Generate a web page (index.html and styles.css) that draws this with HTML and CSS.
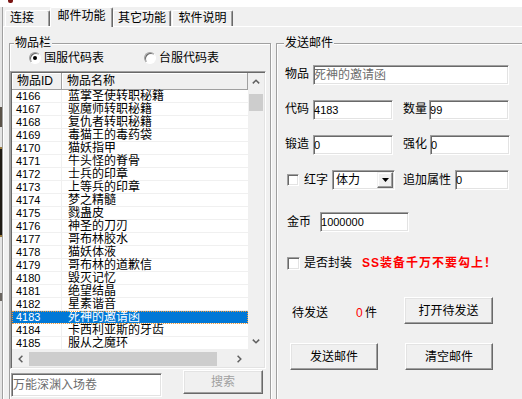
FILE: index.html
```html
<!DOCTYPE html>
<html lang="zh-CN">
<head>
<meta charset="utf-8">
<title>邮件功能</title>
<link rel="stylesheet" href="styles.css">
</head>
<body>
<div class="topbar"><span class="appicon"></span></div>
<div class="window">
  <div class="backdrop">
    <span class="bd-space1"></span>
    <span class="bd-mark1"></span>
    <span class="bd-space2"></span>
    <span class="bd-dark"></span>
    <span class="bd-space3"></span>
    <span class="bd-mark2"></span>
  </div>
  <div class="tabctl">
    <div class="tabs">
      <div class="tab t1">连接</div>
      <div class="tab sel">邮件功能</div>
      <div class="tab t3">其它功能</div>
      <div class="tab t4">软件说明</div>
    </div>
    <div class="panel">
      <fieldset class="group left">
        <legend>物品栏</legend>
        <div class="radios">
          <span class="radio on"></span><span class="rlabel">国服代码表</span>
          <span class="radio radio2"></span><span class="rlabel">台服代码表</span>
        </div>
        <div class="listview">
          <div class="lv-main">
            <div class="lv-head">
              <div class="hc hc1">物品ID</div>
              <div class="hc hc2">物品名称</div>
            </div>
            <div class="row"><span class="id">4166</span><span class="nm">蓝掌圣使转职秘籍</span></div>
            <div class="row"><span class="id">4167</span><span class="nm">驱魔师转职秘籍</span></div>
            <div class="row"><span class="id">4168</span><span class="nm">复仇者转职秘籍</span></div>
            <div class="row"><span class="id">4169</span><span class="nm">毒猫王的毒药袋</span></div>
            <div class="row"><span class="id">4170</span><span class="nm">猫妖指甲</span></div>
            <div class="row"><span class="id">4171</span><span class="nm">牛头怪的脊骨</span></div>
            <div class="row"><span class="id">4172</span><span class="nm">士兵的印章</span></div>
            <div class="row"><span class="id">4173</span><span class="nm">上等兵的印章</span></div>
            <div class="row"><span class="id">4174</span><span class="nm">梦之精髓</span></div>
            <div class="row"><span class="id">4175</span><span class="nm">戮蛊皮</span></div>
            <div class="row"><span class="id">4176</span><span class="nm">神圣的刀刃</span></div>
            <div class="row"><span class="id">4177</span><span class="nm">哥布林胶水</span></div>
            <div class="row"><span class="id">4178</span><span class="nm">猫妖体液</span></div>
            <div class="row"><span class="id">4179</span><span class="nm">哥布林的道歉信</span></div>
            <div class="row"><span class="id">4180</span><span class="nm">毁灭记忆</span></div>
            <div class="row"><span class="id">4181</span><span class="nm">绝望结晶</span></div>
            <div class="row"><span class="id">4182</span><span class="nm">星素谐音</span></div>
            <div class="row sel"><span class="id">4183</span><span class="nm">死神的邀请函</span></div>
            <div class="row"><span class="id">4184</span><span class="nm">卡西利亚斯的牙齿</span></div>
            <div class="row"><span class="id">4185</span><span class="nm">服从之魔环</span></div>
          </div>
          <div class="vscroll">
            <span class="arrow"><svg width="8" height="5" viewBox="0 0 8 5"><path d="M0.8 4.4 L4 1.2 L7.2 4.4" fill="none" stroke="#606060" stroke-width="1.5"/></svg></span>
            <span class="vthumb"></span>
            <span class="fill"></span>
            <span class="arrow"><svg width="8" height="5" viewBox="0 0 8 5"><path d="M0.8 0.6 L4 3.8 L7.2 0.6" fill="none" stroke="#606060" stroke-width="1.5"/></svg></span>
          </div>
          <div class="hscroll">
            <span class="harrow"><svg width="5" height="8" viewBox="0 0 5 8"><path d="M4.4 0.8 L1.2 4 L4.4 7.2" fill="none" stroke="#606060" stroke-width="1.5"/></svg></span>
            <span class="hthumb"></span>
            <span class="fill"></span>
            <span class="harrow"><svg width="5" height="8" viewBox="0 0 5 8"><path d="M0.6 0.8 L3.8 4 L0.6 7.2" fill="none" stroke="#606060" stroke-width="1.5"/></svg></span>
          </div>
          <div class="corner"></div>
        </div>
        <div class="lsearch">
          <div class="edit searchbox dim">万能深渊入场卷</div>
          <div class="btn searchbtn disabled">搜索</div>
        </div>
      </fieldset>

      <fieldset class="group right">
        <legend>发送邮件</legend>
        <div class="form">
          <div class="frow f1">
            <span class="lbl">物品</span>
            <div class="edit w-item dim">死神的邀请函</div>
          </div>
          <div class="frow f2">
            <span class="lbl">代码</span>
            <div class="edit num w80">4183</div>
            <span class="lbl l-right">数量</span>
            <div class="edit num w80 e-right">99</div>
          </div>
          <div class="frow f3">
            <span class="lbl">锻造</span>
            <div class="edit num w80">0</div>
            <span class="lbl l-right">强化</span>
            <div class="edit num w80 e-right2">0</div>
          </div>
          <div class="frow f4">
            <span class="cb"></span>
            <span class="lbl l-red">红字</span>
            <div class="combo"><span class="ctext">体力</span><span class="dd"><svg width="7" height="4" viewBox="0 0 7 4"><path d="M0 0 H7 L3.5 4 Z" fill="#000"/></svg></span></div>
            <span class="lbl l-extra">追加属性</span>
            <div class="edit num w-extra">0</div>
          </div>
          <div class="frow f5">
            <span class="lbl l-gold">金币</span>
            <div class="edit num w-gold">1000000</div>
          </div>
          <div class="frow f6">
            <span class="cb cb2"></span>
            <span class="lbl l-pack">是否封装</span>
            <span class="warn">SS装备千万不要勾上！</span>
          </div>
          <div class="frow f7">
            <span class="lbl l-pend">待发送</span>
            <span class="count">0</span>
            <span class="lbl l-unit">件</span>
            <div class="btn b-open">打开待发送</div>
          </div>
          <div class="frow f8">
            <div class="btn b-send">发送邮件</div>
            <div class="btn b-clear">清空邮件</div>
          </div>
        </div>
      </fieldset>
    </div>
  </div>
</div>
</body>
</html>
```

FILE: styles.css
```css
* { box-sizing: border-box; }
html, body { margin: 0; padding: 0; }
body {
  width: 522px;
  height: 399px;
  overflow: hidden;
  background: #fff;
  font: 12px/14px "Liberation Sans", "Noto Sans CJK SC", sans-serif;
  color: #000;
}

/* top strip with a cut-off window icon */
.topbar { height: 7px; background: #fff; padding-left: 8px; }
.appicon { display: block; width: 5px; height: 3px; background: #7a1412; border-radius: 0 0 2px 2px; }

.window { display: flex; height: 392px; }

/* sliver of the window behind */
.backdrop {
  width: 3px; flex: none;
  display: flex; flex-direction: column;
  background: #e4e4e4;
  border-right: 1px solid #a0a0a0;
}
.bd-space1 { height: 100px; }
.bd-mark1 { height: 20px; background: #5a5248; }
.bd-space2 { height: 20px; }
.bd-dark { height: 90px; background: #1e1a14; border-top: 2px solid #9a7a3a; border-bottom: 2px solid #9a7a3a; }
.bd-space3 { height: 56px; }
.bd-mark2 { height: 8px; background: #6a6560; }

/* tab control */
.tabctl { flex: 1; min-width: 0; display: flex; flex-direction: column; background: #f0f0f0; }
.tabs { height: 19px; display: flex; align-items: flex-end; padding-left: 2px; }
.tab {
  height: 16px;
  border: 1px solid;
  border-bottom: 0;
  border-color: #fff #696969 #fff #fff;
  box-shadow: inset -1px 0 0 #a0a0a0;
  border-radius: 2px 2px 0 0;
  text-align: center;
  line-height: 15px;
  white-space: nowrap;
}
.t1 { width: 45px; text-align: left; padding-left: 4px; }
.tab.sel {
  width: 63px; height: 20px;
  margin-bottom: -1px;
  position: relative; z-index: 1;
  background: #f0f0f0;
  line-height: 17px;
}
.t3 { width: 58px; }
.t4 { width: 61px; margin-left: 1px; }

.panel {
  flex: 1;
  border-top: 1px solid #fff;
  border-left: 1px solid #fff;
  display: flex;
  gap: 5px;
  align-items: flex-start;
  padding: 9px 0 0 5px;
  overflow: hidden;
}

/* group boxes */
fieldset.group {
  margin: 0; padding: 0; min-width: 0;
  flex: none;
  height: 380px;
  border: 1px solid #a0a0a0;
  box-shadow: inset 1px 1px 0 #fff, 1px 1px 0 #fff;
}
.group.left { width: 262px; }
.group.right { width: 260px; }
legend {
  padding: 0 1px;
  margin-left: 4px;
  line-height: 14px;
  background: #f0f0f0;
}
.right legend { margin-left: 7px; }

/* radios */
.radios { display: flex; align-items: center; height: 14px; margin-top: 1px; padding-left: 19px; }
.radio {
  width: 12px; height: 12px; flex: none;
  border-radius: 50%;
  border: 1px solid;
  border-color: #a0a0a0 #fff #fff #a0a0a0;
  box-shadow: inset 1px 1px 0 #696969;
  background: #fff;
  display: flex; align-items: center; justify-content: center;
}
.radio.on::after { content: ""; width: 4px; height: 4px; border-radius: 50%; background: #000; }
.radio.radio2 { margin-left: 40px; }
.rlabel { margin-left: 3px; white-space: nowrap; }

/* list view */
.listview {
  margin-top: 6px;
  width: 256px; height: 298px;
  border: 1px solid;
  border-color: #a0a0a0 #fff #fff #a0a0a0;
  box-shadow: inset 1px 1px 0 #696969, inset -1px -1px 0 #e3e3e3;
  padding: 1px;
  background: #fff;
  display: grid;
  grid-template-columns: 236px 16px;
  grid-template-rows: 277px 17px;
}
.lv-main { overflow: hidden; background: #fff; }
.lv-head { display: flex; height: 17px; }
.hc {
  height: 17px;
  line-height: 16px;
  padding-left: 5px;
  background: #f0f0f0;
  border-right: 1px solid #a0a0a0;
  border-bottom: 1px solid #a0a0a0;
  box-shadow: inset 1px 1px 0 #fff;
  white-space: nowrap;
}
.hc1 { width: 50px; }
.hc2 { flex: 1; }
.row { display: flex; height: 13px; line-height: 12px; border-bottom: 1px solid #f0f0f0; white-space: nowrap; }
.row .id { width: 50px; flex: none; padding-left: 4px; border-right: 1px solid #f0f0f0; font-size: 11px; }
.row .nm { padding-left: 6px; }
.row.sel { background: #0078d7; color: #fff; outline: 1px dotted #f39b3a; outline-offset: -1px; }
.row.sel .id { border-right-color: #0078d7; }

.vscroll { background: #f0f0f0; display: flex; flex-direction: column; align-items: center; }
.arrow { height: 17px; width: 100%; display: flex; align-items: center; justify-content: center; flex: none; }
.vthumb { width: 14px; height: 17px; margin-top: 4px; background: #cdcdcd; flex: none; }
.fill { flex: 1; }
.hscroll { background: #f0f0f0; display: flex; align-items: center; }
.harrow { width: 17px; height: 17px; display: flex; align-items: center; justify-content: center; flex: none; }
.hthumb { width: 188px; height: 14px; background: #cdcdcd; flex: none; }
.corner { background: #f0f0f0; }

/* edits and buttons */
.edit {
  height: 20px;
  border: 1px solid;
  border-color: #a0a0a0 #fff #fff #a0a0a0;
  box-shadow: inset 1px 1px 0 #696969, inset -1px -1px 0 #e3e3e3;
  background: #fff;
  line-height: 18px;
  padding-left: 0;
  white-space: nowrap;
  overflow: hidden;
  flex: none;
}
.edit.num { font-size: 11px; }
.edit.dim { color: #6d6d6d; }
.btn {
  height: 27px;
  border: 1px solid;
  border-color: #fff #696969 #696969 #fff;
  box-shadow: inset -1px -1px 0 #a0a0a0, inset 1px 1px 0 #e3e3e3;
  background: #f0f0f0;
  display: flex; align-items: center; justify-content: center;
  white-space: nowrap;
  flex: none;
}
.btn.disabled { color: #a0a0a0; }

.lsearch { display: flex; align-items: flex-start; margin-top: 1px; }
.searchbox { width: 151px; height: 24px; line-height: 22px; margin: 3px 0 0 1px; padding-left: 1px; }
.searchbtn { width: 80px; height: 24px; margin-left: 21px; }

/* send mail form */
.form { display: flex; flex-direction: column; padding-left: 8px; }
.frow { display: flex; align-items: center; flex: none; }
.lbl { white-space: nowrap; flex: none; }
.f1, .f2, .f3, .f4 { margin-top: 15px; height: 20px; }
.f1 .lbl, .f2 .lbl, .f3 .lbl { margin-top: -2px; }
.f1 .edit, .f2 .edit, .f3 .edit { margin-left: 4px; }
.w-item { width: 196px; }
.w80 { width: 80px; }
.l-right { margin-left: 10px; }
.f2 .e-right { margin-left: 2px; }
.f3 .e-right2 { margin-left: 3px; }

.cb {
  width: 12px; height: 12px; flex: none;
  margin-left: 2px;
  border: 1px solid;
  border-color: #a0a0a0 #fff #fff #a0a0a0;
  box-shadow: inset 1px 1px 0 #696969, inset -1px -1px 0 #e3e3e3;
  background: #fff;
}
.cb2 { width: 13px; height: 13px; }
.l-red { margin-left: 5px; }
.combo {
  width: 63px; height: 20px; flex: none;
  margin-left: 4px;
  border: 1px solid;
  border-color: #a0a0a0 #fff #fff #a0a0a0;
  box-shadow: inset 1px 1px 0 #696969, inset -1px -1px 0 #e3e3e3;
  background: #fff;
  display: flex; align-items: center;
  padding: 1px 1px 1px 3px;
}
.ctext { flex: 1; line-height: 16px; }
.dd {
  width: 16px; height: 16px; flex: none;
  border: 1px solid;
  border-color: #f0f0f0 #696969 #696969 #f0f0f0;
  box-shadow: inset -1px -1px 0 #a0a0a0, inset 1px 1px 0 #fff;
  background: #f0f0f0;
  display: flex; align-items: center; justify-content: center;
}
.l-extra { margin-left: 8px; }
.w-extra { width: 54px; margin-left: 4px; }

.f5 { margin-top: 22px; height: 20px; }
.l-gold { margin-left: 2px; }
.w-gold { width: 89px; margin-left: 9px; }

.f6 { margin-top: 21px; height: 20px; }
.l-pack { margin-left: 4px; }
.warn { margin-left: 10px; color: #ff0000; font-weight: bold; white-space: nowrap; letter-spacing: 1px; }

.f7 { margin-top: 24px; height: 27px; }
.f7 .lbl, .f7 .count { margin-top: 5px; }
.l-pend { margin-left: 7px; }
.count { margin-left: 28px; color: #ff0000; width: 6px; }
.l-unit { margin-left: 3px; }
.b-open { width: 89px; margin-left: 27px; }

.f8 { margin-top: 19px; height: 27px; }
.b-send { width: 88px; margin-left: 5px; }
.b-clear { width: 88px; margin-left: 27px; }
```
